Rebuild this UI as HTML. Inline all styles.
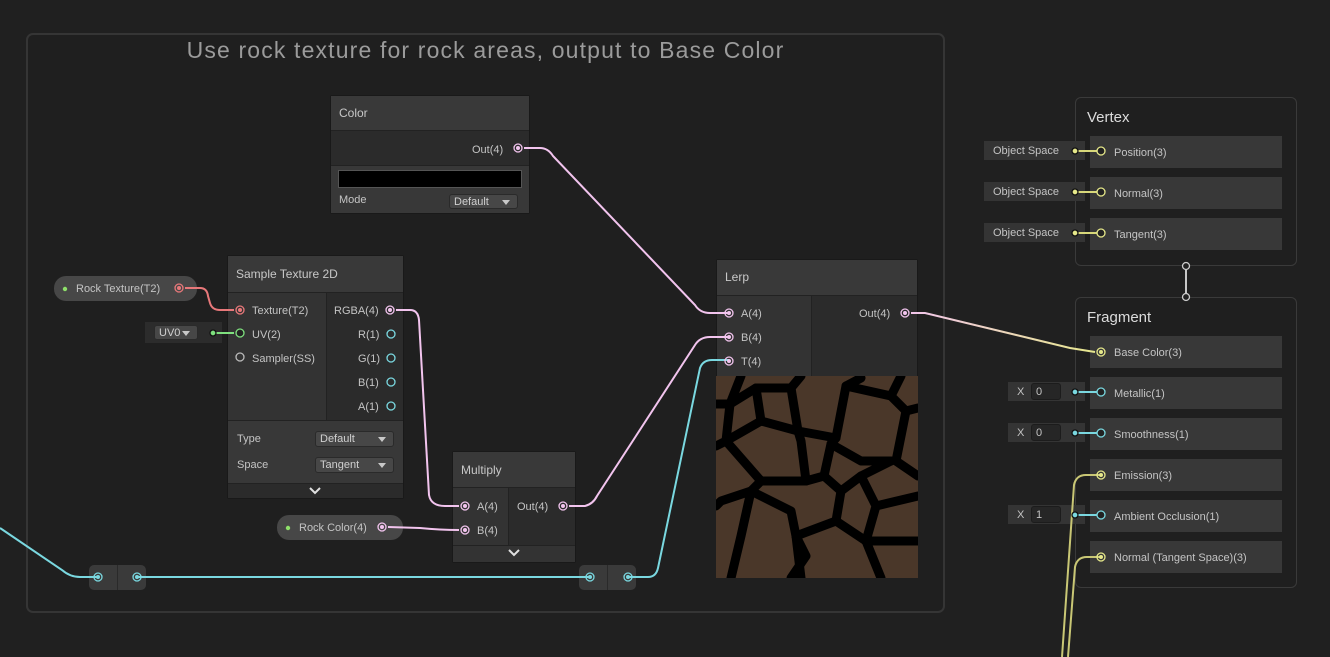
<!DOCTYPE html>
<html><head><meta charset="utf-8"><style>
*{margin:0;padding:0;box-sizing:border-box}
body{width:1330px;height:657px;background:#202020;overflow:hidden;position:relative;font-family:"Liberation Sans",sans-serif;font-size:11px;color:#c4c4c4}
.a{position:absolute}
.grp{left:26px;top:33px;width:919px;height:580px;border:2px solid #353535;border-radius:7px;background:#1f1f1f}
.title{left:26px;width:919px;top:37px;text-align:center;font-size:23px;color:#9b9b9b;letter-spacing:1.15px}
.node{background:#2b2b2b;border:1px solid #191919;border-radius:2px}
.hdr{background:#393939;color:#c8c8c8;font-size:12px;padding-left:8px;border-bottom:1px solid #222}
.dd{background:#474747;border:1px solid #2a2a2a;border-radius:3px;color:#d0d0d0;font-size:11px;padding-left:4px;line-height:14px}
.dd:after{content:"";position:absolute;right:7px;top:5px;border-left:4px solid transparent;border-right:4px solid transparent;border-top:5px solid #c8c8c8}
.pill{background:#474747;border-radius:12px;color:#c4c4c4}
.box{border:1px solid #3a3a3a;border-radius:6px;background:#1f1f1f}
.row{background:#383838;color:#c4c4c4;font-size:11px;padding-left:24px}
.inl{background:#343434;color:#c4c4c4;font-size:11px}
.fld{background:#262626;border:1px solid #1c1c1c;border-radius:3px;color:#c4c4c4;padding-left:4px;line-height:14px}
</style></head><body>
<div class="a grp"></div>
<div class="a title">Use rock texture for rock areas, output to Base Color</div>

<div class="a node" style="left:330px;top:95px;width:200px;height:119px"></div>
<div class="a hdr" style="left:331px;top:96px;width:198px;height:35px;line-height:34px">Color</div>
<div class="a" style="left:331px;top:131px;width:198px;height:35px;background:#2b2b2b;border-bottom:1px solid #222"></div>
<div class="a" style="left:472px;top:144px">Out(4)</div>
<div class="a" style="left:331px;top:166px;width:198px;height:47px;background:#383838"></div>
<div class="a" style="left:338px;top:170px;width:184px;height:18px;background:#000;border:1px solid #555"></div>
<div class="a" style="left:339px;top:194px">Mode</div>
<div class="a dd" style="left:449px;top:194px;width:69px;height:15px">Default</div>

<div class="a node" style="left:227px;top:255px;width:177px;height:244px"></div>
<div class="a hdr" style="left:228px;top:256px;width:175px;height:37px;line-height:36px">Sample Texture 2D</div>
<div class="a" style="left:228px;top:293px;width:98px;height:127px;background:#333"></div>
<div class="a" style="left:326px;top:293px;width:77px;height:127px;background:#2b2b2b;border-left:1px solid #222"></div>
<div class="a" style="left:252px;top:305px">Texture(T2)</div>
<div class="a" style="left:252px;top:329px">UV(2)</div>
<div class="a" style="left:252px;top:353px">Sampler(SS)</div>
<div class="a" style="left:334px;top:305px">RGBA(4)</div>
<div class="a" style="left:358px;top:329px">R(1)</div>
<div class="a" style="left:358px;top:353px">G(1)</div>
<div class="a" style="left:358px;top:377px">B(1)</div>
<div class="a" style="left:358px;top:401px">A(1)</div>
<div class="a" style="left:228px;top:420px;width:175px;height:63px;background:#383838;border-top:1px solid #222"></div>
<div class="a" style="left:237px;top:433px">Type</div>
<div class="a" style="left:237px;top:459px">Space</div>
<div class="a dd" style="left:315px;top:431px;width:79px;height:16px">Default</div>
<div class="a dd" style="left:315px;top:457px;width:79px;height:16px">Tangent</div>
<div class="a" style="left:228px;top:483px;width:175px;height:15px;background:#2b2b2b;border-top:1px solid #222"></div>

<div class="a node" style="left:452px;top:451px;width:124px;height:112px"></div>
<div class="a hdr" style="left:453px;top:452px;width:122px;height:36px;line-height:36px">Multiply</div>
<div class="a" style="left:453px;top:488px;width:55px;height:57px;background:#333"></div>
<div class="a" style="left:508px;top:488px;width:67px;height:57px;background:#2b2b2b;border-left:1px solid #222"></div>
<div class="a" style="left:477px;top:501px">A(4)</div>
<div class="a" style="left:477px;top:525px">B(4)</div>
<div class="a" style="left:517px;top:501px">Out(4)</div>
<div class="a" style="left:453px;top:545px;width:122px;height:17px;background:#333;border-top:1px solid #222"></div>

<div class="a node" style="left:716px;top:259px;width:202px;height:119px"></div>
<div class="a hdr" style="left:717px;top:260px;width:200px;height:36px;line-height:35px">Lerp</div>
<div class="a" style="left:717px;top:296px;width:94px;height:80px;background:#333"></div>
<div class="a" style="left:811px;top:296px;width:106px;height:80px;background:#2b2b2b;border-left:1px solid #222"></div>
<div class="a" style="left:741px;top:308px">A(4)</div>
<div class="a" style="left:741px;top:332px">B(4)</div>
<div class="a" style="left:741px;top:356px">T(4)</div>
<div class="a" style="left:859px;top:308px">Out(4)</div>
<svg class="a" style="left:716px;top:376px" width="202" height="202" viewBox="0 0 202 202">
<rect width="202" height="202" fill="#4a3729"/>
<g fill="none" stroke="#000" stroke-width="9" stroke-linejoin="round" stroke-linecap="round">
<polyline points="0,28 14,28 25,0"/>
<polyline points="14,28 40,12 75,12 85,0"/>
<polyline points="75,12 82,55 120,62 130,10 145,2"/>
<polyline points="130,10 175,20 185,0"/>
<polyline points="175,20 190,35 202,32"/>
<polyline points="14,28 10,65 0,70"/>
<polyline points="40,12 45,45 82,55"/>
<polyline points="45,45 10,65"/>
<polyline points="10,65 45,105"/>
<polyline points="82,55 85,65 90,105 108,100 115,68 120,62"/>
<polyline points="115,68 145,85 175,85"/>
<polyline points="190,35 180,85 202,100"/>
<polyline points="45,105 90,105"/>
<polyline points="45,105 35,115 5,125 0,130"/>
<polyline points="35,115 25,160 15,202"/>
<polyline points="35,115 75,135 80,160 85,202"/>
<polyline points="108,100 125,115 120,145 80,160"/>
<polyline points="125,115 145,100 175,85"/>
<polyline points="145,100 160,130 150,165 120,145"/>
<polyline points="160,130 202,120"/>
<polyline points="150,165 165,202"/>
<polyline points="150,165 202,165"/>
<polyline points="80,160 90,180 75,202"/>
</g></svg>

<div class="a pill" style="left:54px;top:276px;width:143px;height:25px;line-height:26px;padding-left:22px">Rock Texture(T2)</div>
<div class="a pill" style="left:277px;top:515px;width:126px;height:25px;line-height:26px;padding-left:22px">Rock Color(4)</div>
<div class="a" style="left:145px;top:322px;width:77px;height:21px;background:#2c2c2c"></div>
<div class="a dd" style="left:154px;top:325px;width:44px;height:15px">UV0</div>
<div class="a" style="left:89px;top:565px;width:57px;height:25px;background:#3a3a3a;border-radius:5px"></div>
<div class="a" style="left:117px;top:565px;width:1px;height:25px;background:#2a2a2a"></div>
<div class="a" style="left:579px;top:565px;width:57px;height:25px;background:#3a3a3a;border-radius:5px"></div>
<div class="a" style="left:607px;top:565px;width:1px;height:25px;background:#2a2a2a"></div>

<div class="a box" style="left:1075px;top:97px;width:222px;height:169px"></div>
<div class="a" style="left:1087px;top:109px;font-size:15px;color:#dcdcdc">Vertex</div>
<div class="a row" style="left:1090px;top:136px;width:192px;height:32px;line-height:35px">Position(3)</div>
<div class="a row" style="left:1090px;top:177px;width:192px;height:32px;line-height:35px">Normal(3)</div>
<div class="a row" style="left:1090px;top:218px;width:192px;height:32px;line-height:35px">Tangent(3)</div>
<div class="a inl" style="left:984px;top:141px;width:101px;height:19px;line-height:20px;padding-left:9px">Object Space</div>
<div class="a inl" style="left:984px;top:182px;width:101px;height:19px;line-height:20px;padding-left:9px">Object Space</div>
<div class="a inl" style="left:984px;top:223px;width:101px;height:19px;line-height:20px;padding-left:9px">Object Space</div>

<div class="a box" style="left:1075px;top:297px;width:222px;height:291px"></div>
<div class="a" style="left:1087px;top:309px;font-size:15px;color:#dcdcdc">Fragment</div>
<div class="a row" style="left:1090px;top:336px;width:192px;height:32px;line-height:35px">Base Color(3)</div>
<div class="a row" style="left:1090px;top:377px;width:192px;height:32px;line-height:35px">Metallic(1)</div>
<div class="a row" style="left:1090px;top:418px;width:192px;height:32px;line-height:35px">Smoothness(1)</div>
<div class="a row" style="left:1090px;top:459px;width:192px;height:32px;line-height:35px">Emission(3)</div>
<div class="a row" style="left:1090px;top:500px;width:192px;height:32px;line-height:35px">Ambient Occlusion(1)</div>
<div class="a row" style="left:1090px;top:541px;width:192px;height:32px;line-height:35px">Normal (Tangent Space)(3)</div>
<div class="a inl" style="left:1008px;top:382px;width:77px;height:19px;line-height:20px;padding-left:9px">X</div>
<div class="a fld" style="left:1031px;top:383px;width:30px;height:17px;line-height:16px">0</div>
<div class="a inl" style="left:1008px;top:423px;width:77px;height:19px;line-height:20px;padding-left:9px">X</div>
<div class="a fld" style="left:1031px;top:424px;width:30px;height:17px;line-height:16px">0</div>
<div class="a inl" style="left:1008px;top:505px;width:77px;height:19px;line-height:20px;padding-left:9px">X</div>
<div class="a fld" style="left:1031px;top:506px;width:30px;height:17px;line-height:16px">1</div>

<svg class="a" style="left:0;top:0" width="1330" height="657">
<defs><linearGradient id="g1" x1="905" y1="0" x2="1101" y2="0" gradientUnits="userSpaceOnUse"><stop offset="0" stop-color="#f2c4ee"/><stop offset="1" stop-color="#e6e88a"/></linearGradient></defs>
<g fill="none" stroke-width="2">
<path d="M524 148 L540 148 Q548 148 553 156 L695 305 Q700 313 710 313 L729 313" stroke="#f2c4ee"/>
<path d="M185 288 L200 288 Q207 288 208 296 L210 303 Q212 310 220 310 L234 310" stroke="#e8787a"/>
<path d="M213 333 L234 333" stroke="#7ee07e"/>
<path d="M396 310 L410 310 Q418 310 419 320 L429 495 Q431 506 445 506 L459 506" stroke="#f2c4ee"/>
<path d="M388 527 L420 528 Q440 530 459 530" stroke="#f2c4ee"/>
<path d="M569 506 L585 506 Q593 504 597 496 L695 345 Q700 337 710 337 L729 337" stroke="#f2c4ee"/>
<path d="M0 528 L62 570 Q70 577 80 577 L98 577 M137 577 L590 577 M628 577 L648 577 Q656 577 658 568 L700 368 Q703 360 712 360 L729 360" stroke="#7ad8e0"/>
<path d="M911 313 L925 313 L1070 348 L1095 352" stroke="url(#g1)"/>
<path d="M1062 657 L1074 485 Q1076 475 1086 475 L1101 475 M1068 657 L1075 567 Q1077 557 1087 557 L1101 557" stroke="#c9c775"/>
<path d="M1076 151 L1101 151 M1076 192 L1101 192 M1076 233 L1101 233" stroke="#d8d87a"/>
<path d="M1076 392 L1101 392 M1076 433 L1101 433 M1076 515 L1101 515" stroke="#7ad8e0"/>
<path d="M1186 268 L1186 295" stroke="#c8c8c8"/>
</g>
<g stroke-width="1.3">
<circle cx="518" cy="148" r="4" fill="none" stroke="#f2c4ee"/><circle cx="518" cy="148" r="2" fill="#f2c4ee"/>
<circle cx="179" cy="288" r="4" fill="none" stroke="#e8787a"/><circle cx="179" cy="288" r="2" fill="#e8787a"/>
<circle cx="240" cy="310" r="4" fill="none" stroke="#e8787a"/><circle cx="240" cy="310" r="2" fill="#e8787a"/>
<circle cx="240" cy="333" r="4" fill="#222" stroke="#7ee07e"/>
<circle cx="213" cy="333" r="3" fill="#7ee07e" stroke="#111"/>
<circle cx="240" cy="357" r="4" fill="none" stroke="#bbb"/>
<circle cx="390" cy="310" r="4" fill="none" stroke="#f2c4ee"/><circle cx="390" cy="310" r="2" fill="#f2c4ee"/>
<circle cx="391" cy="334" r="4" fill="none" stroke="#7ad8e0"/>
<circle cx="391" cy="358" r="4" fill="none" stroke="#7ad8e0"/>
<circle cx="391" cy="382" r="4" fill="none" stroke="#7ad8e0"/>
<circle cx="391" cy="406" r="4" fill="none" stroke="#7ad8e0"/>
<circle cx="465" cy="506" r="4" fill="none" stroke="#f2c4ee"/><circle cx="465" cy="506" r="2" fill="#f2c4ee"/>
<circle cx="465" cy="530" r="4" fill="none" stroke="#f2c4ee"/><circle cx="465" cy="530" r="2" fill="#f2c4ee"/>
<circle cx="563" cy="506" r="4" fill="none" stroke="#f2c4ee"/><circle cx="563" cy="506" r="2" fill="#f2c4ee"/>
<circle cx="382" cy="527" r="4" fill="none" stroke="#f2c4ee"/><circle cx="382" cy="527" r="2" fill="#f2c4ee"/>
<circle cx="729" cy="313" r="4" fill="none" stroke="#f2c4ee"/><circle cx="729" cy="313" r="2" fill="#f2c4ee"/>
<circle cx="729" cy="337" r="4" fill="none" stroke="#f2c4ee"/><circle cx="729" cy="337" r="2" fill="#f2c4ee"/>
<circle cx="729" cy="361" r="4" fill="none" stroke="#f2c4ee"/><circle cx="729" cy="361" r="2" fill="#f2c4ee"/>
<circle cx="905" cy="313" r="4" fill="none" stroke="#f2c4ee"/><circle cx="905" cy="313" r="2" fill="#f2c4ee"/>
<circle cx="65" cy="289" r="2.2" fill="#8ee06a" stroke="none"/>
<circle cx="288" cy="528" r="2.2" fill="#8ee06a" stroke="none"/>
<circle cx="98" cy="577" r="4" fill="none" stroke="#7ad8e0"/><circle cx="98" cy="577" r="2" fill="#7ad8e0"/>
<circle cx="137" cy="577" r="4" fill="none" stroke="#7ad8e0"/><circle cx="137" cy="577" r="2" fill="#7ad8e0"/>
<circle cx="590" cy="577" r="4" fill="none" stroke="#7ad8e0"/><circle cx="590" cy="577" r="2" fill="#7ad8e0"/>
<circle cx="628" cy="577" r="4" fill="none" stroke="#7ad8e0"/><circle cx="628" cy="577" r="2" fill="#7ad8e0"/>
<circle cx="1101" cy="151" r="4" fill="#222" stroke="#e6e88a"/>
<circle cx="1101" cy="192" r="4" fill="#222" stroke="#e6e88a"/>
<circle cx="1101" cy="233" r="4" fill="#222" stroke="#e6e88a"/>
<circle cx="1075" cy="151" r="3" fill="#e6e88a" stroke="#111"/>
<circle cx="1075" cy="192" r="3" fill="#e6e88a" stroke="#111"/>
<circle cx="1075" cy="233" r="3" fill="#e6e88a" stroke="#111"/>
<circle cx="1101" cy="352" r="4" fill="none" stroke="#e6e88a"/><circle cx="1101" cy="352" r="2" fill="#e6e88a"/>
<circle cx="1101" cy="475" r="4" fill="none" stroke="#e6e88a"/><circle cx="1101" cy="475" r="2" fill="#e6e88a"/>
<circle cx="1101" cy="557" r="4" fill="none" stroke="#e6e88a"/><circle cx="1101" cy="557" r="2" fill="#e6e88a"/>
<circle cx="1101" cy="392" r="4" fill="#222" stroke="#7ad8e0"/>
<circle cx="1101" cy="433" r="4" fill="#222" stroke="#7ad8e0"/>
<circle cx="1101" cy="515" r="4" fill="#222" stroke="#7ad8e0"/>
<circle cx="1075" cy="392" r="3" fill="#7ad8e0" stroke="#111"/>
<circle cx="1075" cy="433" r="3" fill="#7ad8e0" stroke="#111"/>
<circle cx="1075" cy="515" r="3" fill="#7ad8e0" stroke="#111"/>
<circle cx="1186" cy="266" r="3.5" fill="#222" stroke="#ccc"/>
<circle cx="1186" cy="297" r="3.5" fill="#222" stroke="#ccc"/>
</g>
<g fill="none" stroke="#e0e0e0" stroke-width="2">
<path d="M310 488 L315 493 L320 488"/>
<path d="M509 550 L514 555 L519 550"/>
</g>
</svg>
</body></html>
